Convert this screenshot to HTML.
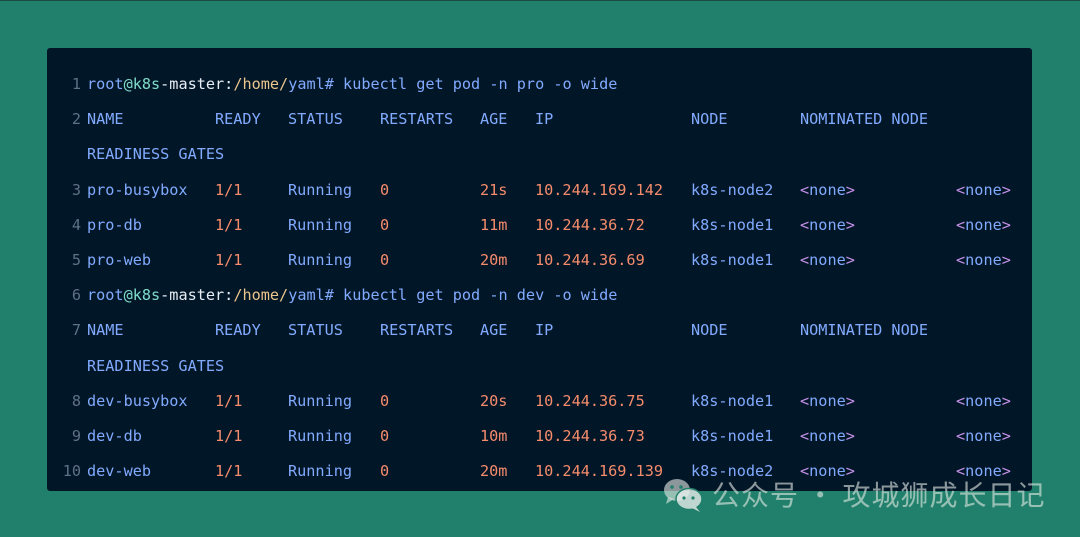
<!DOCTYPE html>
<html><head><meta charset="utf-8"><style>
html,body{margin:0;padding:0}
body{width:1080px;height:537px;background:#21806b;position:relative;overflow:hidden;border-top:1px solid #1b4a40;box-sizing:border-box}
.panel{position:absolute;left:47px;top:47px;width:985px;height:443px;background:#011627;border-radius:3px}
.t{position:absolute;font-family:"DejaVu Sans Mono","Liberation Mono",monospace;font-size:15.2px;line-height:20px;white-space:pre;color:#82aaff}
.n{color:#5f7185;text-align:right;width:30px}
.b{color:#82aaff}.o{color:#f78c6c}.g{color:#7fdbca}.w{color:#e8eef5}.y{color:#ecc48d}.p{color:#c792ea}
.wm{position:absolute;left:712px;top:474px;font-family:"Noto Sans CJK SC",sans-serif;font-size:28px;line-height:38px;color:rgba(225,230,228,0.62);white-space:pre;letter-spacing:1px}
</style></head><body>
<div class="panel"></div>
<div id="c"></div>
<svg style="position:absolute;left:662px;top:476px" width="44" height="36" viewBox="0 0 44 36">
<g fill="rgba(225,230,228,0.62)">
<ellipse cx="15" cy="13" rx="13" ry="11"/><path d="M6 20 L4 27 L12 22Z"/>
</g>
<g fill="rgba(230,235,233,0.8)" stroke="#21806b" stroke-width="1.5">
<ellipse cx="27" cy="22" rx="13" ry="10.5"/></g>
<path d="M34 30 L38 35 L30 31Z" fill="rgba(230,235,233,0.8)"/>
<g fill="#21806b"><circle cx="10" cy="10" r="1.8"/><circle cx="19" cy="10" r="1.8"/><circle cx="22" cy="21" r="1.6"/><circle cx="31" cy="21" r="1.6"/></g>
</svg>
<div class="wm">公众号 · 攻城狮成长日记</div>
<script>
var ys=[83,118,153,189,224,259,294,329,365,400,435,470];
var X=[87,215,288,380,480,535,691,800,956];
var h='';
function sp(x,y,cls,txt){h+='<div class="t '+cls+'" style="left:'+x+'px;top:'+(y-10)+'px">'+txt+'</div>';}
function ln(i,y){sp(51,y,'n',String(i));}
function cmd(i,y,ns){ln(i,y);sp(87,y,'','<span class="b">root</span><span class="g">@k8s</span><span class="w">-master:</span><span class="y">/home/</span><span class="b">yaml# kubectl get pod -n '+ns+' -o wide</span>');}
function hdr(i,y,y2){ln(i,y);var hs=['NAME','READY','STATUS','RESTARTS','AGE','IP','NODE','NOMINATED NODE'];for(var k=0;k<hs.length;k++)sp(X[k],y,'b',hs[k]);sp(87,y2,'b','READINESS GATES');}
function row(i,y,a){ln(i,y);sp(X[0],y,'b',a[0]);sp(X[1],y,'o','1/1');sp(X[2],y,'b','Running');sp(X[3],y,'o','0');sp(X[4],y,'o',a[1]);sp(X[5],y,'o',a[2]);sp(X[6],y,'b',a[3]);
var nn='<span class="p">&lt;</span>none<span class="p">&gt;</span>';sp(X[7],y,'b',nn);sp(X[8],y,'b',nn);}
cmd(1,ys[0],'pro');hdr(2,ys[1],ys[2]);
row(3,ys[3],['pro-busybox','21s','10.244.169.142','k8s-node2']);
row(4,ys[4],['pro-db','11m','10.244.36.72','k8s-node1']);
row(5,ys[5],['pro-web','20m','10.244.36.69','k8s-node1']);
cmd(6,ys[6],'dev');hdr(7,ys[7],ys[8]);
row(8,ys[9],['dev-busybox','20s','10.244.36.75','k8s-node1']);
row(9,ys[10],['dev-db','10m','10.244.36.73','k8s-node1']);
row(10,ys[11],['dev-web','20m','10.244.169.139','k8s-node2']);
document.getElementById('c').innerHTML=h;
</script>
</body></html>
